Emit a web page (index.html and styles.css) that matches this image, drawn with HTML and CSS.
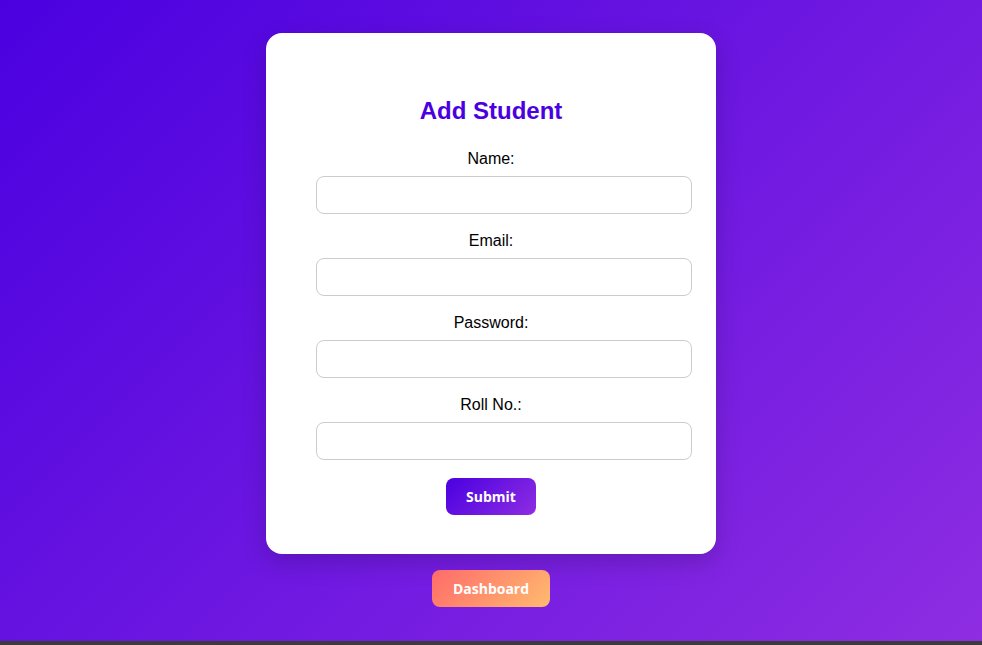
FILE: index.html
```html
<!DOCTYPE html>
<html lang="en">
<head>
<meta charset="utf-8">
<title>Add Student</title>
<link rel="stylesheet" href="styles.css">
</head>
<body>
<div class="page">
  <div class="card">
    <h2 class="title">Add Student</h2>
    <form class="form">
      <label class="label" for="name">Name:</label>
      <input class="field" id="name" type="text">
      <label class="label" for="email">Email:</label>
      <input class="field" id="email" type="email">
      <label class="label" for="password">Password:</label>
      <input class="field" id="password" type="password">
      <label class="label" for="roll">Roll No.:</label>
      <input class="field" id="roll" type="text">
      <button class="submit" type="button">Submit</button>
    </form>
  </div>
  <a class="dash" href="#">Dashboard</a>
</div>
<div class="bar"></div>
</body>
</html>
```
FILE: styles.css
```css
html, body {
  margin: 0;
  padding: 0;
  background: #3b3b3b;
}
.page {
  height: 641px;
  box-sizing: border-box;
  padding-top: 33px;
  background: linear-gradient(135deg, #4a00e0, #8e2de2);
  display: flex;
  flex-direction: column;
  align-items: center;
  font-family: "Liberation Sans", Arial, sans-serif;
}
.card {
  width: 450px;
  box-sizing: border-box;
  padding: 40px 50px 39px;
  background: #fff;
  border-radius: 16px;
  box-shadow: 0 8px 24px rgba(0, 0, 0, 0.18);
}
.title {
  margin: 24px 0 26px;
  text-align: center;
  font-size: 24px;
  font-weight: bold;
  color: #4a00e0;
  line-height: 27px;
}
.form {
  display: flex;
  flex-direction: column;
  align-items: center;
}
.label {
  display: block;
  font-size: 16px;
  line-height: 18px;
  color: #000;
  margin-bottom: 8px;
}
.field {
  width: 376px;
  height: 38px;
  box-sizing: border-box;
  margin: 0 -26px 18px 0;
  align-self: flex-start;
  padding: 0 12px;
  border: 1px solid #ccc;
  border-radius: 8px;
  font-size: 16px;
  outline: none;
}
.submit {
  height: 37px;
  padding: 0 20px;
  border: none;
  border-radius: 8px;
  background: linear-gradient(135deg, #4a00e0, #8e2de2);
  color: #fff;
  font-family: "Open Sans", sans-serif;
  font-weight: bold;
  font-size: 14px;
  width: 90px;
  cursor: pointer;
}
.dash {
  margin-top: 16px;
  width: 118px;
  height: 37px;
  box-sizing: border-box;
  display: flex;
  align-items: center;
  justify-content: center;
  border-radius: 8px;
  background: linear-gradient(135deg, #ff6a6a, #ffbb6f);
  color: #fff;
  text-decoration: none;
  font-family: "Open Sans", sans-serif;
  font-weight: bold;
  font-size: 14px;
}
.bar {
  height: 4px;
  background: #3b3b3b;
}
```
